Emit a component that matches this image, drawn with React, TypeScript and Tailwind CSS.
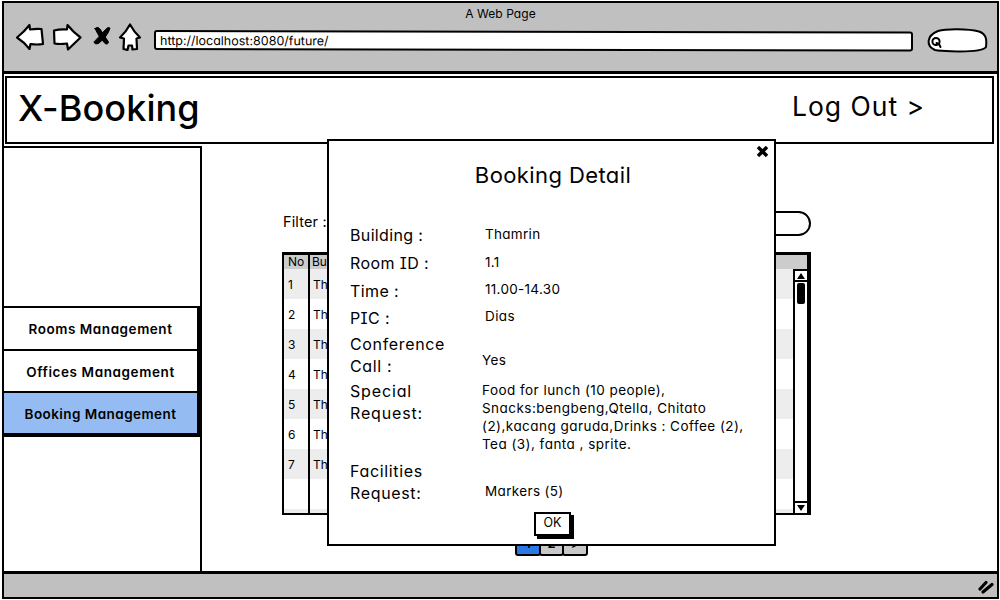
import type { ReactNode } from 'react';

const pageFont =
  "font-['Inter','Noto_Sans',sans-serif] font-[420] [font-feature-settings:'cv11','cv08','calt'_0] text-black";

function Toolbar() {
  return (
    <header className="relative h-[71px] shrink-0 border-b-[3px] border-black bg-[#c0c0c0]">
      <div className="h-5 pt-[2px] text-center text-[12px] leading-[17px] tracking-[0.05px]">A Web Page</div>
      <div className="flex items-start">
        <svg width="140" height="34" viewBox="0 0 140 34" className="ml-[8px] shrink-0" fill="#fff" stroke="#000" strokeWidth="2.2" strokeLinejoin="round" strokeLinecap="round">
          <path d="M5 14.5 Q12 9 17.500 2 L18 6.500 Q24 5.500 29.500 6 L31 21 Q25 22 18.500 21 L17.500 26 Q12 19 5 14.500 Z" />
          <path d="M42 7.500 Q48 6 55 6.500 L55.500 2 Q61 9 68.500 14.500 L56 26.500 L55 20.500 Q48 21.500 42.500 20.500 Z" />
          <path d="M118 1.500 Q122 9 128 14.500 L124.500 15.500 L125 26 L120.500 26.500 L120 22.500 L116.500 22.500 L115.500 27 L111.500 26 L112 15.500 L108 14.500 Q114 9 118 1.500 Z" />
          <g fill="#000" strokeWidth="1">
            <path d="M83 5.500 Q86 3 88 6 L96.500 19 Q96 22 93 20.500 Q86 13 83 5.500 Z" />
            <path d="M94 6 Q96 3.500 98 5 Q96 13 86.500 20.500 Q83.500 22 82 19.500 Z" />
          </g>
        </svg>
        <div className="mt-[7px] ml-[2px] flex h-[20px] w-[759px] origin-left skew-y-[0.12deg] items-center rounded-[3px] border-2 border-black bg-white pt-px pl-[4px] text-[12.5px] leading-[16px]">
          http://localhost:8080/future/
        </div>
        <svg width="64" height="30" viewBox="0 0 64 30" className="ml-[13px] shrink-0" fill="#fff" stroke="#000" strokeWidth="2" strokeLinecap="round">
          <path d="M12 8 C20 5.500 42 5.500 53 8.500 C60 11 61 16 60 24 C57 28 46 28.500 34 28.500 C25 28 16 28.500 9 27 C0 23 0 13 12 8 Z" />
          <circle cx="10" cy="18.500" r="3.600" />
          <path d="M10.500 20 L13 21 L14.500 24" />
        </svg>
      </div>
    </header>
  );
}

function NavItem({ children, className }: { children: ReactNode; className: string }) {
  return (
    <div className={`flex items-center justify-center border-r-[3px] border-black pt-[2px] text-[13.5px] font-semibold ${className}`}>
      {children}
    </div>
  );
}

function Sidebar() {
  return (
    <nav className="mt-px h-[425px] w-[198px] shrink-0 border-t-2 border-r-2 border-black pt-[158px]">
      <NavItem className="h-[43px] border-t-2 tracking-[0.55px]">Rooms Management</NavItem>
      <NavItem className="h-[42px] border-t-2 tracking-[0.6px]">Offices Management</NavItem>
      <NavItem className="h-[46px] border-t-2 border-b-[4px] bg-[#94bbf2] tracking-[0.45px]">Booking Management</NavItem>
    </nav>
  );
}

const rows = ['1', '2', '3', '4', '5', '6', '7', ''];

function BookingTable() {
  return (
    <div className="mt-[17px] flex h-[263px] w-[529px] overflow-hidden border-t-[3px] border-r-[4px] border-b-2 border-l-2 border-black">
      <div className="w-full">
        <div className="flex h-[14px] w-full bg-[#ccc] text-[12px] leading-[13px]">
          <div className="w-[26px] shrink-0 border-r-2 border-black pl-[4px]">No</div>
          <div className="w-[17px] overflow-hidden pl-[2px]">Bu</div>
        </div>
        <div className="flex">
          <div className="flex-1">
            {rows.map((n) => (
              <div key={n} className="flex h-[30px] text-[12px] leading-[31px] odd:bg-[#ededed]">
                <div className="w-[26px] shrink-0 border-r-2 border-black pl-[4px]">{n}</div>
                <div className="w-[17px] overflow-hidden pl-[3px]">{n && 'Th'}</div>
              </div>
            ))}
            <div className="flex h-[5px] bg-[#ededed]">
              <div className="w-[26px] border-r-2 border-black" />
            </div>
          </div>
          <div className="flex h-[244px] w-[14px] flex-col border-t-2 border-l-2 border-black bg-white">
            <div className="flex h-[11px] items-center justify-center border-b-2 border-black">
              <svg width="8" height="6" viewBox="0 0 8 6"><path d="M4 0 L8 6 H0 Z" /></svg>
            </div>
            <div className="mt-px ml-[2px] h-[21px] w-[8px] rounded-[2px] bg-black" />
            <div className="mt-auto flex h-[12px] items-center justify-center border-t-2 border-black">
              <svg width="8" height="6" viewBox="0 0 8 6"><path d="M4 6 L8 0 H0 Z" /></svg>
            </div>
          </div>
        </div>
      </div>
    </div>
  );
}

function Pager() {
  return (
    <div className="mt-[17px] ml-[233px] flex text-[13px] leading-[19px] font-semibold">
      <div className="h-6 w-[26px] rounded-[3px] border-2 border-black bg-[#2b78e4] text-center">1</div>
      <div className="-ml-[2px] h-6 w-[25px] rounded-[3px] border-2 border-black bg-[#c8c8c8] text-center">2</div>
      <div className="-ml-[2px] h-6 w-[26px] rounded-[3px] border-2 border-black bg-[#c8c8c8] text-center">&gt;</div>
    </div>
  );
}

const details = [
  { label: 'Building :', value: 'Thamrin', row: 'h-[28px] tracking-[0.35px]', at: 'pt-px pl-[3px] tracking-[0.3px]' },
  { label: 'Room ID :', value: '1.1', row: 'h-[28px] tracking-[0.4px]', at: 'pt-px pl-[3px] tracking-[0.3px]' },
  { label: 'Time :', value: '11.00-14.30', row: 'h-[27px] tracking-[0.4px]', at: 'pl-[3px] tracking-[0.3px]' },
  { label: 'PIC :', value: 'Dias', row: 'h-[26px] tracking-[0.4px]', at: 'pl-[3px] tracking-[0.4px]' },
  { label: 'Conference\nCall :', value: 'Yes', row: 'h-[47px] tracking-[0.65px]', at: 'pt-[18px] tracking-[0.4px]' },
  {
    label: 'Special\nRequest:',
    value: 'Food for lunch (10 people),\nSnacks:bengbeng,Qtella, Chitato\n(2),kacang garuda,Drinks : Coffee (2),\nTea (3), fanta , sprite.',
    row: 'h-[80px] tracking-[0.85px]',
    at: 'pt-px tracking-[0.46px]',
  },
  { label: 'Facilities\nRequest:', value: 'Markers (5)', row: 'h-[52px] tracking-[0.65px]', at: 'pt-[22px] pl-[3px] tracking-[0.35px]' },
];

function BookingDialog() {
  return (
    <section className="absolute top-[139px] left-[327px] flex h-[407px] w-[449px] flex-col border-2 border-black bg-white">
      <div className="flex h-[18px] justify-end pt-[5px] pr-[6px]">
        <svg width="11" height="11" viewBox="0 0 11 11" stroke="#000" strokeWidth="3.400"><path d="M1 1 L10 10 M10 1 L1 10" /></svg>
      </div>
      <h2 className="h-[65px] pt-px pl-[3px] text-center text-[22px] leading-[30px] tracking-[0.4px]">Booking Detail</h2>
      {details.map((d) => (
        <div key={d.label} className={`flex shrink-0 pl-[21px] ${d.row}`}>
          <div className="w-[132px] shrink-0 text-[16px] leading-[22px] whitespace-pre">{d.label}</div>
          <div className={`text-[13.5px] leading-[18px] whitespace-pre ${d.at}`}>{d.value}</div>
        </div>
      ))}
      <button className="ml-[205px] h-[24px] w-[37px] border-2 border-black bg-white pb-[2px] text-[12.5px] leading-[18px] shadow-[3px_3px_0_0_#000]">OK</button>
    </section>
  );
}

export default function App() {
  return (
    <div className={`relative h-[600px] w-[1000px] overflow-hidden bg-white pt-px pl-[2px] ${pageFont}`}>
      <div className="flex h-[598px] w-[997px] flex-col border-2 border-black">
        <Toolbar />
        <div className="mt-[2px] ml-px flex h-[68px] w-[989px] shrink-0 justify-between border-2 border-black pl-[11px]">
          <h1 className="pt-[8px] text-[36px] leading-[44px] font-[480] tracking-[0.1px]">X-Booking</h1>
          <div className="w-[200px] pt-[8px] text-[26.5px] leading-[40px] tracking-[0.98px] whitespace-nowrap">Log Out &gt;</div>
        </div>
        <main className="mt-px flex min-h-0 flex-1">
          <Sidebar />
          <div className="ml-[80px] w-[529px] pt-[66px]">
            <div className="flex h-6 items-center">
              <span className="pr-8 pb-[3px] pl-px text-[14.5px] tracking-[0.15px]">Filter :</span>
              <div className="h-[25px] flex-1 rounded-full border-2 border-black" />
            </div>
            <BookingTable />
            <Pager />
          </div>
        </main>
        <footer className="flex h-[26px] shrink-0 items-center justify-end border-t-[3px] border-black bg-[#c0c0c0] pr-[2px]">
          <svg width="18" height="16" viewBox="0 0 18 16" stroke="#000" strokeWidth="3.200" strokeLinecap="round"><path d="M3 11 L9 4.500 M6 14 L15 6.500" /></svg>
        </footer>
      </div>
      <BookingDialog />
    </div>
  );
}
